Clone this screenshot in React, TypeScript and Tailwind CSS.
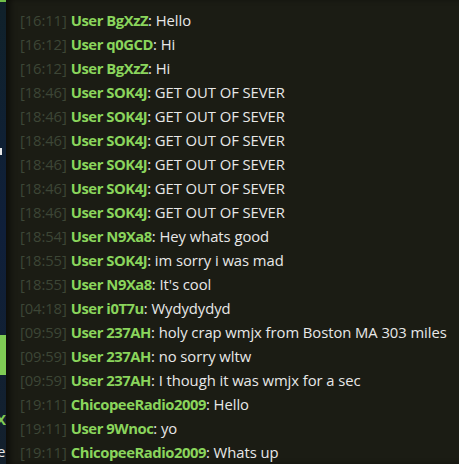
import React from "react";

const rows: [string, string, string][] = [
  ["16:11", "User BgXzZ", "Hello"],
  ["16:12", "User q0GCD", "Hi"],
  ["16:12", "User BgXzZ", "Hi"],
  ["18:46", "User SOK4J", "GET OUT OF SEVER"],
  ["18:46", "User SOK4J", "GET OUT OF SEVER"],
  ["18:46", "User SOK4J", "GET OUT OF SEVER"],
  ["18:46", "User SOK4J", "GET OUT OF SEVER"],
  ["18:46", "User SOK4J", "GET OUT OF SEVER"],
  ["18:46", "User SOK4J", "GET OUT OF SEVER"],
  ["18:54", "User N9Xa8", "Hey whats good"],
  ["18:55", "User SOK4J", "im sorry i was mad"],
  ["18:55", "User N9Xa8", "It's cool"],
  ["04:18", "User i0T7u", "Wydydydyd"],
  ["09:59", "User 237AH", "holy crap wmjx from Boston MA 303 miles"],
  ["09:59", "User 237AH", "no sorry wltw"],
  ["09:59", "User 237AH", "I though it was wmjx for a sec"],
  ["19:11", "ChicopeeRadio2009", "Hello"],
  ["19:11", "User 9Wnoc", "yo"],
  ["19:11", "ChicopeeRadio2009", "Whats up"],
];

export default function App() {
  return (
    <div className="flex h-[464px] w-[459px] overflow-hidden bg-[#1b1c14]" style={{ fontFamily: '"Open Sans", "Noto Sans", sans-serif' }}>
      <div className="flex w-[6px] shrink-0 flex-col overflow-hidden bg-gradient-to-b from-[#10212a] via-[#0f1f3a] to-[#13202c]">
        <div className="h-[2px] w-[6px] bg-[#6fbf4a]" />
        <div className="mt-[146px] h-[7px] w-[2px] bg-[#e8e8e8]" />
        <div className="mt-[180px] h-[40px] w-[6px] bg-[#7fcb55]" />
        <div className="mt-[34px] flex h-[20px] items-center text-[15px] font-bold leading-none text-[#7fcb55]">
          <span className="-ml-[4px]">X</span>
        </div>
        <div className="mt-[12px] flex h-[20px] items-center text-[15px] leading-none text-[#e8e8e8]">
          <span className="-ml-[3px]">e</span>
        </div>
      </div>
      <div className="flex-1 pl-[14px] pt-[8px] shadow-[inset_6px_0_6px_-2px_rgba(0,0,0,0.55)]">
        <div className="flex flex-col">
          {rows.map(([t, u, m], i) => (
            <div key={i} className="flex h-[24px] items-center whitespace-nowrap text-[14.8px]">
              <span className="tracking-[-0.1px] text-[#3d4636]">[{t}]</span>
              <span className="ml-[4px] font-bold tracking-[-0.45px] text-[#8ad55c]">{u}</span>
              <span className="tracking-[-0.05px] text-[#e8e8e8]">: {m}</span>
            </div>
          ))}
        </div>
      </div>
    </div>
  );
}
